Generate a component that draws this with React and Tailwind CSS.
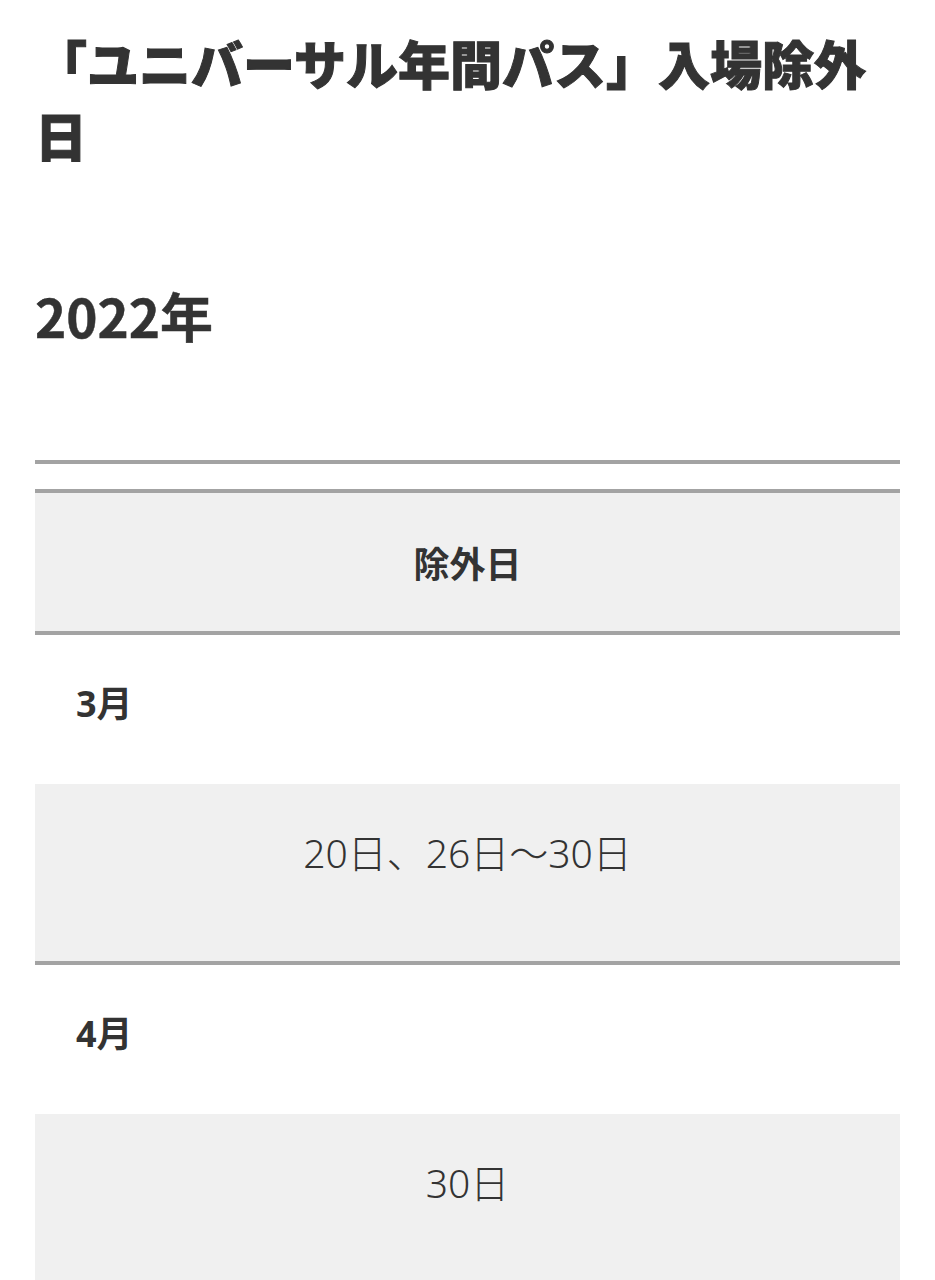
import React from "react";

const months = [
  { month: "3月", days: "20日、26日〜30日" },
  { month: "4月", days: "30日" },
];

const App = () => {
  return (
    <div
      className="min-h-screen bg-white px-[35px] text-[#333]"
      style={{ fontFamily: '"Noto Sans CJK JP", "Noto Sans", sans-serif' }}
    >
      <h1 className="pt-[27px] text-[52px] font-black leading-[72px] [-webkit-text-stroke:1px_#333]">
        「ユニバーサル年間パス」入場除外日
      </h1>
      <h2 className="mt-[108px] text-[53px] font-bold leading-[72px] [-webkit-text-stroke:0.5px_#333]">
        2022年
      </h2>

      <div className="mt-[109px] border-t-[4px] border-[#a3a3a3]">
        <div className="mt-[25px] border-t-[4px] border-[#a3a3a3] bg-[#f0f0f0] py-[42px] text-center text-[36px] font-bold leading-[54px]">
          除外日
        </div>
        {months.map((row) => (
          <div key={row.month} className="border-t-[4px] border-[#a3a3a3]">
            <div
              className="bg-white pb-[53px] pl-[41px] pt-[42px] text-[36px] font-bold leading-[54px]"
              style={{ fontFamily: '"Noto Sans", "Noto Sans CJK JP", sans-serif' }}
            >
              {row.month}
            </div>
            <div
              className="bg-[#f0f0f0] pb-[80px] pt-[40px] text-center text-[39px] font-light leading-[57px]"
              style={{ fontFamily: '"Noto Sans", "Noto Sans CJK JP", sans-serif' }}
            >
              {row.days}
            </div>
          </div>
        ))}
      </div>
    </div>
  );
};

export default App;
